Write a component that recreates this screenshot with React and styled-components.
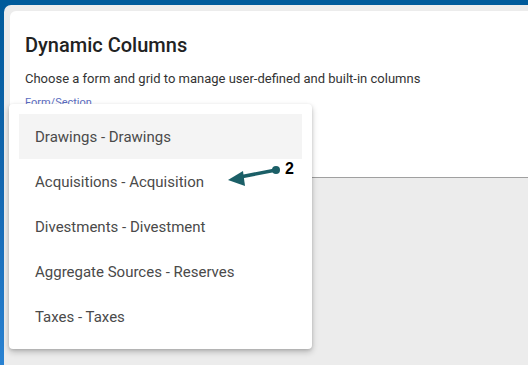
import React from 'react';
import styled, {createGlobalStyle} from 'styled-components';

const Global = createGlobalStyle`
  html, body {
    margin: 0;
    padding: 0;
    width: 528px;
    height: 365px;
    overflow: hidden;
  }
  body {
    font-family: Roboto, "Liberation Sans", sans-serif;
    background: linear-gradient(180deg, #005a9a 0%, #1467b0 50%, #2a82d2 100%);
  }
`;

const Shell = styled.div`
  position: relative;
  height: 365px;
  padding: 5px 0 0 4px;
  box-sizing: border-box;
  background: linear-gradient(#005b9b, #005b9b) top / 100% 5px no-repeat;
`;

const Frame = styled.div`
  height: 360px;
  background: #ececec;
  border-top-left-radius: 7px;
  padding: 6px 0 0 6px;
  box-sizing: border-box;
`;

const Card = styled.div`
  height: 167px;
  box-sizing: border-box;
  background: #fff;
  border-top-left-radius: 6px;
  border-bottom: 1px solid #a0a0a0;
  padding: 22px 15px 0;
`;

const Title = styled.h1`
  margin: 0;
  font-size: 20px;
  font-weight: 500;
  color: #222;
  line-height: 24px;
`;

const Subtitle = styled.p`
  margin: 14px 0 0;
  font-size: 13px;
  color: #333;
  line-height: 16px;
`;

const Label = styled.div`
  margin-top: 9px;
  font-size: 11px;
  color: #5b6cc0;
  line-height: 14px;
`;

const Menu = styled.ul`
  position: absolute;
  left: 9px;
  top: 104px;
  width: 303px;
  margin: 0;
  padding: 10px 10px;
  box-sizing: border-box;
  list-style: none;
  background: #fff;
  border-radius: 4px;
  box-shadow: 0 3px 6px rgba(0, 0, 0, 0.22), 0 1px 3px rgba(0, 0, 0, 0.12);
`;

const Item = styled.li`
  height: 45px;
  display: flex;
  align-items: center;
  padding: 0 16px;
  font-size: 15px;
  color: #4a4a4a;
  background: ${p => (p.$active ? '#f4f4f4' : 'transparent')};
`;

const Callout = styled.div`
  position: absolute;
  left: 224px;
  top: 159px;
  display: flex;
  align-items: flex-start;
`;

const Num = styled.span`
  font-family: "Liberation Sans", Arial, sans-serif;
  font-size: 16px;
  font-weight: 700;
  color: #000;
  line-height: 18px;
  margin-left: 3px;
  margin-top: 1px;
`;

const items = [
    'Drawings - Drawings',
    'Acquisitions - Acquisition',
    'Divestments - Divestment',
    'Aggregate Sources - Reserves',
    'Taxes - Taxes',
];

export default () => (
    <Shell>
        <Global />
        <Frame>
            <Card>
                <Title>Dynamic Columns</Title>
                <Subtitle>Choose a form and grid to manage user-defined and built-in columns</Subtitle>
                <Label>Form/Section</Label>
            </Card>
        </Frame>
        <Menu>
            {items.map((item, i) => (
                <Item key={item} $active={i === 0}>{item}</Item>
            ))}
        </Menu>
        <Callout>
            <svg width="58" height="30" viewBox="0 0 58 30">
                <line x1="52" y1="11" x2="16" y2="18" stroke="#1b5f67" strokeWidth="3.5" strokeLinecap="round" />
                <circle cx="52" cy="11" r="4" fill="#1b5f67" />
                <polygon points="4,21 19,12 21,27" fill="#1b5f67" />
            </svg>
            <Num>2</Num>
        </Callout>
    </Shell>
);
